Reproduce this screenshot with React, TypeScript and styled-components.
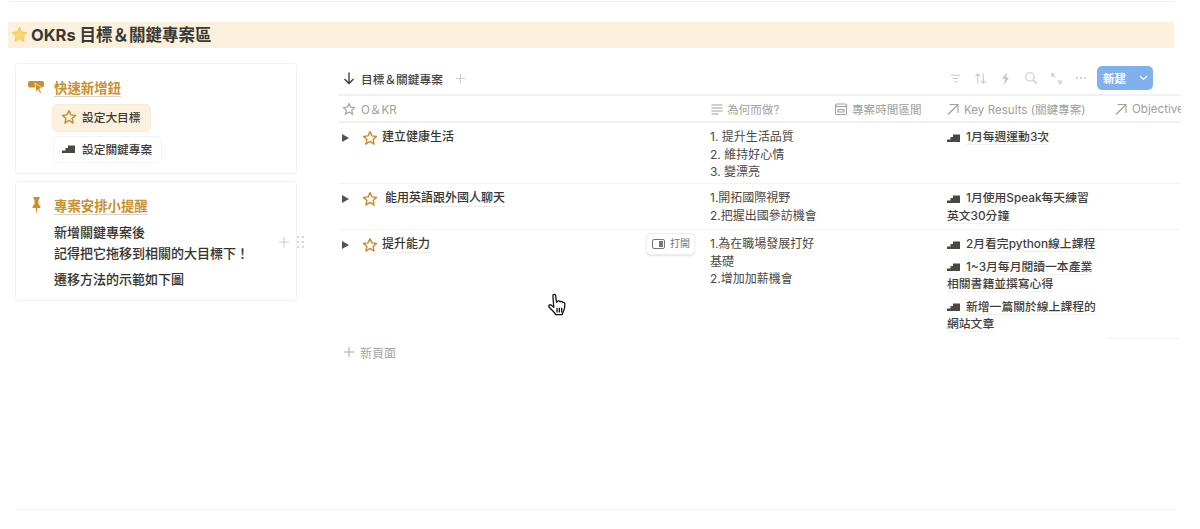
import React from "react";
import styled, { createGlobalStyle } from "styled-components";

const Global = createGlobalStyle`
  html, body { margin: 0; padding: 0; background: #fff; }
  body { font-family: Inter, "Noto Sans CJK TC", "Liberation Sans", sans-serif; color: #37352f; }
`;

const Page = styled.div`
  width: 1200px; height: 529px; overflow: hidden; box-sizing: border-box; padding: 1px 26px 0 8px;
  display: flex; flex-direction: column;
`;
const TopRule = styled.div`height: 1px; background: #f1f1f0; margin-left: 2px; flex: none;`;
const Heading = styled.h2`
  margin: 20px 0 0; height: 26px; background: #fbf0dc; display: flex; align-items: center; gap: 3px;
  font-size: 16.5px; font-weight: 700; color: #3a3833; padding: 0 0 2px 3px; box-sizing: border-box; flex: none;
`;
const Body = styled.div`display: flex; margin-top: 15px; height: 446px; flex: none; margin-right: -7px;`;
const Side = styled.aside`width: 282px; margin-left: 7px; flex: none; display: flex; flex-direction: column; gap: 7px;`;
const Card = styled.section<{ $h: number }>`
  height: ${p => p.$h}px; box-sizing: border-box; border: 1px solid #f2f2f0; border-radius: 3px;
  padding: 14px 10px 0 12px; display: grid; grid-template-columns: 26px 1fr; align-content: start;
`;
const CardIcon = styled.div<{ $indent?: number }>`color: #c98f2e; padding: 1px 0 0 ${p => p.$indent ?? 0}px;`;
const CardTitle = styled.div`
  font-size: 13.4px; line-height: 20px; font-weight: 600; color: #c9902f;
  text-decoration: underline; text-decoration-color: #d6d3cc; text-underline-offset: 3px;
`;
const BtnStack = styled.div`grid-column: 2; margin-top: 5px; margin-left: -2px; display: flex; flex-direction: column; align-items: flex-start; gap: 4px;`;
const TplBtn = styled.div<{ $on?: boolean }>`
  display: inline-flex; align-items: center; box-sizing: border-box;
  height: ${p => (p.$on ? 28 : 27)}px; width: ${p => (p.$on ? 99 : 109)}px;
  margin-left: ${p => (p.$on ? 0 : 1)}px;
  padding: 0 0 3px ${p => (p.$on ? 8 : 8)}px; gap: ${p => (p.$on ? 5 : 1)}px;
  border-radius: 5px; font-size: 11.7px; font-weight: 500; color: #3c3a35;
  background: ${p => (p.$on ? "#fbf1de" : "#fff")};
  border: 1px solid ${p => (p.$on ? "#f6ecd9" : "#f4f4f2")};
`;
const Notes = styled.div`
  grid-column: 2; margin-top: 5px; font-size: 13px; font-weight: 500; line-height: 20.5px; color: #37352f;
  -webkit-text-stroke: .08px #37352f;
`;
const NoteP = styled.p`margin: 0 0 6px;`;
const Handles = styled.div`
  position: absolute; left: 278px; top: 236px; display: flex; align-items: center; gap: 7px; color: #c8c7c4;
`;
const Main = styled.main`flex: none; width: 843px; margin-left: 41px; overflow: hidden;`;
const Toolbar = styled.div`height: 30px; padding-bottom: 1px; display: flex; align-items: center; border-bottom: 2px solid #f1f1ef;`;
const ViewName = styled.div`display: flex; align-items: center; gap: 5px; font-size: 11.7px; font-weight: 500; color: #46443f; padding-left: 4px;`;
const AddView = styled.span`color: #c9c8c5; margin-left: 7px; display: flex;`;
const ToolIcons = styled.div`margin-left: auto; display: flex; align-items: center; gap: 12px; color: #c6c5c2;`;
const NewBtn = styled.div`
  margin: 0 28px 0 10px; width: 56px; height: 24px; border-radius: 5px; background: #7fb2ec; color: #fff;
  display: flex; align-items: center; font-size: 11.5px; font-weight: 700; padding-left: 6px; box-sizing: border-box; gap: 13px;
`;
const Grid = styled.div`display: grid; grid-template-columns: 364px 124px 114px 168px 73px;`;
const Head = styled.div<{ $pad?: number; $gap?: number }>`
  height: 25px; border-bottom: 2px solid #f1f1ef; display: flex; align-items: center; white-space: nowrap; overflow: hidden;
  gap: ${p => p.$gap ?? 4}px; padding-left: ${p => p.$pad ?? 8}px;
  font-size: 11.6px; color: #a09f9b;
`;
const Cell = styled.div<{ $h: number; $flat?: boolean }>`
  height: ${p => p.$h}px; box-sizing: border-box; padding: 6px 8px 0 7px;
  border-bottom: ${p => (p.$flat ? "none" : "1px solid #f3f3f1")};
  font-size: 12px; line-height: 17.5px; color: #4b4945; position: relative;
`;
const Why = styled(Cell)`padding-left: 8px; padding-top: 5px;`;
const TitleRow = styled.div`display: flex; align-items: center; color: #37352f; font-weight: 500; font-size: 12px;`;
const Caret = styled.span`
  width: 0; height: 0; border-left: 7px solid #55534e; border-top: 4px solid transparent; border-bottom: 4px solid transparent;
  margin: 0 13px 0 -3px;
`;
const TitleText = styled.span<{ $gap: number; $line?: boolean }>`
  margin-left: ${p => p.$gap}px; line-height: 16px;
  border-bottom: 1px solid ${p => (p.$line ? "#eeedeb" : "transparent")};
`;
const OpenChip = styled.div`
  position: absolute; right: 7px; top: 3px; width: 49px; height: 22px; box-sizing: border-box; display: flex; align-items: center; gap: 5px;
  padding-left: 5px; border: 1px solid #eeeeec; border-radius: 5px; box-shadow: 0 1px 2px rgba(15,15,15,.12); background: #fff;
  font-size: 10px; color: #77756f;
`;
const Rel = styled.div`margin-bottom: 5px; font-size: 11.8px; font-weight: 500; color: #403e3a;`;
const RelText = styled.span`border-bottom: 1px solid #f1f1ef;`;
const AddRow = styled.div`display: flex; align-items: center; gap: 5px; height: 26px; padding-left: 5px; font-size: 12px; color: #a5a4a0;`;
const BottomRule = styled.div`position: absolute; left: 16px; top: 509px; width: 1160px; height: 1px; background: #f1f1f0;`;
const Cursor = styled.svg`position: absolute; left: 547px; top: 293px;`;

const Star = ({ c = "#c98f2e", s = 16 }: { c?: string; s?: number }) => (
  <svg width={s} height={s} viewBox="0 0 24 24" fill="none" stroke={c} strokeWidth="2.2" strokeLinejoin="round" style={{ flex: "none" }}>
    <path d="M12 2.500l2.900 6.300 6.900.8-5.100 4.700 1.400 6.800L12 17.200l-6.100 3.900 1.400-6.800-5.100-4.700 6.900-.8z" />
  </svg>
);
const Stairs = () => (
  <svg width="13" height="9" viewBox="0 0 13 9" fill="#4a4844" style={{ flex: "none", margin: "0 6px 0 0", verticalAlign: "-0.5px" }}>
    <path d="M0 9V6.500h3.500V4h2.500V1.500h7V9z" />
  </svg>
);
const Stroke = ({ s = 14, children }: { s?: number; children: React.ReactNode }) => (
  <svg width={s} height={s} viewBox="0 0 14 14" fill="none" stroke="currentColor" strokeWidth="1.1" style={{ flex: "none" }}>{children}</svg>
);
const Arrow = () => <Stroke><path d="M2 12.500L12 2.500M3.500 2.500H12V11" /></Stroke>;
const Plus = ({ s = 11 }: { s?: number }) => <Stroke s={s}><path d="M7 1v12M1 7h12" /></Stroke>;

const KR = ({ children }: { children: React.ReactNode }) => (
  <Rel><Stairs /><RelText>{children}</RelText></Rel>
);
const Title = ({ text, gap = 4, line = true }: { text: string; gap?: number; line?: boolean }) => (
  <TitleRow><Caret /><Star /><TitleText $gap={gap} $line={line}>{text}</TitleText></TitleRow>
);

export default function App() {
  return (
    <>
      <Global />
      <Page>
        <TopRule />
        <Heading>
          <svg width="17" height="17" viewBox="0 0 24 24" style={{ flex: "none" }}>
            <path d="M12 1.500l3.100 6.800 7.400.9-5.500 5.100 1.500 7.400L12 18.100l-6.500 3.600L7 14.300 1.500 9.200l7.400-.9z" fill="#fbd566" stroke="#f2bd45" strokeWidth="1" strokeLinejoin="round" />
          </svg>
          OKRs 目標＆關鍵專案區
        </Heading>
        <Body>
          <Side>
            <Card $h={111}>
              <CardIcon>
                <svg width="17" height="15" viewBox="0 0 17 15" fill="currentColor">
                  <rect x="0" y="1" width="16" height="6.500" rx="2" />
                  <path d="M7 3l7.500 5-3 1 2 3.500-1.600 1-2-3.600L8 12.500z" stroke="#fff" strokeWidth=".7" />
                </svg>
              </CardIcon>
              <CardTitle><span>快速新增鈕</span></CardTitle>
              <BtnStack>
                <TplBtn $on><Star s={16} />設定大目標</TplBtn>
                <TplBtn><Stairs />設定關鍵專案</TplBtn>
              </BtnStack>
            </Card>
            <Card $h={120}>
              <CardIcon $indent={3}>
                <svg width="11" height="16" viewBox="0 0 14 16" preserveAspectRatio="none" fill="currentColor">
                  <path d="M3 0h8v1.500L9.500 3v4L12 9.500V11H8l-.7 5h-.6L6 11H2V9.500L4.500 7V3L3 1.500z" />
                </svg>
              </CardIcon>
              <CardTitle><span>專案安排小提醒</span></CardTitle>
              <Notes>
                <NoteP>新增關鍵專案後<br />記得把它拖移到相關的大目標下！</NoteP>
                <NoteP>遷移方法的示範如下圖</NoteP>
              </Notes>
            </Card>
          </Side>
          <Main>
            <Toolbar>
              <ViewName>
                <Stroke s={14}><path d="M7 1.500v11M2.500 8L7 12.500 11.500 8" stroke="#37352f" strokeWidth="1.300" /></Stroke>
                目標＆關鍵專案
                <AddView><Plus /></AddView>
              </ViewName>
              <ToolIcons>
                <Stroke s={13}><path d="M2 3.500h10M4 7h6M5.500 10.500h3" /></Stroke>
                <Stroke s={13}><path d="M4 12V2M1.500 4.500L4 2l2.500 2.500M10 2v10M7.500 9.500L10 12l2.500-2.500" /></Stroke>
                <svg width="13" height="13" viewBox="0 0 13 13" fill="currentColor"><path d="M8 0L3 7h3l-1 6 5-7.500H7z" /></svg>
                <Stroke s={14}><circle cx="6" cy="6" r="4.200" /><path d="M9 9l4 4" /></Stroke>
                <Stroke s={13}><path d="M2 2l3.500 3.500M2 5V2h3M12 12L8.500 8.500M12 9v3H9" /></Stroke>
                <svg width="12" height="12" viewBox="0 0 12 12" fill="currentColor"><circle cx="2" cy="6" r="1" /><circle cx="6" cy="6" r="1" /><circle cx="10" cy="6" r="1" /></svg>
              </ToolIcons>
              <NewBtn>新建<svg width="9" height="6" viewBox="0 0 9 6" fill="none" stroke="#fff" strokeWidth="1.100"><path d="M1 1l3.500 3.500L8 1" /></svg></NewBtn>
            </Toolbar>
            <Grid>
              <Head $pad={4} $gap={5}><Star c="#a9a8a4" s={14} />O＆KR</Head>
              <Head $gap={3}><Stroke><path d="M1.500 3h11M1.500 6h11M1.500 9h11M1.500 12h7" /></Stroke>為何而做?</Head>
              <Head><Stroke><rect x="1.500" y="2" width="11" height="10.500" rx="1.500" /><path d="M1.500 4.500h11M4 7.500h6v2.500H4z" /></Stroke>專案時間區間</Head>
              <Head $pad={6}><Arrow />Key Results (關鍵專案)</Head>
              <Head $pad={6}><Arrow />Objectives</Head>

              <Cell $h={61}><Title text="建立健康生活" line={false} /></Cell>
              <Why $h={61}>1. 提升生活品質<br />2. 維持好心情<br />3. 變漂亮</Why>
              <Cell $h={61} />
              <Cell $h={61}><KR>1月每週運動3次</KR></Cell>
              <Cell $h={61} />

              <Cell $h={46}><Title text="能用英語跟外國人聊天" gap={7} /></Cell>
              <Why $h={46}>1.開拓國際視野<br />2.把握出國參訪機會</Why>
              <Cell $h={46} />
              <Cell $h={46}><KR>1月使用Speak每天練習<br />英文30分鐘</KR></Cell>
              <Cell $h={46} />

              <Cell $h={109} $flat>
                <Title text="提升能力" />
                <OpenChip>
                  <svg width="13" height="10" viewBox="0 0 13 10" fill="none" stroke="#77756f"><rect x=".5" y=".5" width="12" height="9" rx="1.500" /><rect x="7" y="2" width="4" height="6" fill="#77756f" stroke="none" /></svg>
                  打開
                </OpenChip>
              </Cell>
              <Why $h={109} $flat>1.為在職場發展打好基礎<br />2.增加加薪機會</Why>
              <Cell $h={109} $flat />
              <Cell $h={109} $flat>
                <KR>2月看完python線上課程</KR>
                <KR>1~3月每月閱讀一本產業<br />相關書籍並撰寫心得</KR>
                <KR>新增一篇關於線上課程的<br />網站文章</KR>
              </Cell>
              <Cell $h={109} />
            </Grid>
            <AddRow><Plus s={12} />新頁面</AddRow>
          </Main>
        </Body>
        <Handles>
          <Plus s={12} />
          <svg width="8" height="12" viewBox="0 0 8 12" fill="currentColor">
            {[1, 6, 11].map(y => [1, 6].map(x => <circle key={`${x}${y}`} cx={x} cy={y} r="1" />))}
          </svg>
        </Handles>
        <Cursor width="21" height="24" viewBox="0 0 22 26" fill="#fff" stroke="#111" strokeWidth="1.400" strokeLinejoin="round">
          <path d="M6 3c0-2 3-2 3 0l1 7 1-1c1-1 2.500-.5 2.800.5 1-.8 2.400-.3 2.700.8 1-.5 2.500.2 2.500 1.500 0 3-.5 6-1.500 8-.8 1.700-1.500 3-1.500 3.700H9c-.5-1.500-2-3-3.500-4.500L2 15.500c-1.300-1.500.5-3.500 2-2.500l3 2.500z" />
          <path d="M10.500 16v5M13 16v5M15.500 16v5" />
        </Cursor>
        <BottomRule />
      </Page>
    </>
  );
}
